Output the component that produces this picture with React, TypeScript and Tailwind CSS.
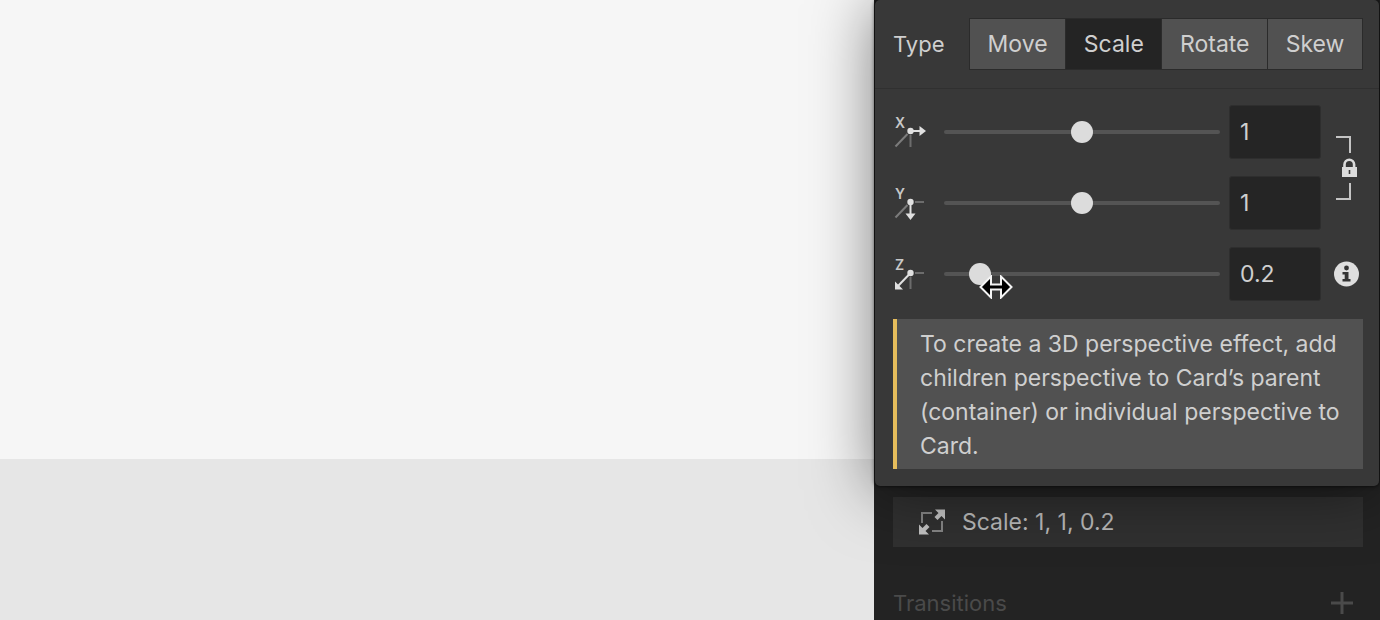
import { useState } from "react";

const transformTypes = ["Move", "Scale", "Rotate", "Skew"];

const axes = ["X", "Y", "Z"] as const;
type Axis = (typeof axes)[number];

function AxisIcon({ axis }: { axis: Axis }) {
  return (
    <svg width="34" height="42" viewBox="0 -4 34 42" fill="none" className="overflow-visible" aria-hidden="true">
      <text x="2" y="13" fontSize="14" fontWeight="600" fill="#c8c8c8" fontFamily="Inter, sans-serif">
        {axis}
      </text>
      {axis !== "Z" && <path d="M14.5 19 2.5 31.5" stroke="#7c7c7c" strokeWidth="2" />}
      {axis !== "Y" && <path d="M17.5 20V32" stroke="#6c6c6c" strokeWidth="2" />}
      {axis !== "X" && <path d="M22 16H31" stroke="#6c6c6c" strokeWidth="2" />}
      {axis === "X" && (
        <>
          <path d="M17.5 16H28" stroke="#e0e0e0" strokeWidth="2" />
          <path d="M26.5 11 33 16 26.5 21Z" fill="#e0e0e0" />
        </>
      )}
      {axis === "Y" && (
        <>
          <path d="M17.5 16V29" stroke="#e0e0e0" strokeWidth="2" />
          <path d="M12.5 27.5 17.5 34 22.5 27.5Z" fill="#e0e0e0" />
        </>
      )}
      {axis === "Z" && (
        <>
          <path d="M17.5 16 5 29" stroke="#e0e0e0" strokeWidth="2" />
          <path d="M2 24.5V32.5H10Z" fill="#e0e0e0" />
        </>
      )}
      <circle cx="17.5" cy="16" r="3.2" fill="#e0e0e0" />
    </svg>
  );
}

function LinkLock() {
  return (
    <svg width="26" height="70" viewBox="0 0 26 70" fill="none">
      <path d="M2 4H16V20M2 66H16V50" stroke="#c4c4c4" strokeWidth="2" />
      <path d="M10.5 35V31.5a4.8 4.8 0 0 1 9.6 0V35" stroke="#dcdcdc" strokeWidth="2.6" />
      <path fillRule="evenodd" clipRule="evenodd" d="M8 34h15V44H8ZM14.7 37v4h1.6v-4Z" fill="#dcdcdc" />
    </svg>
  );
}

function InfoIcon() {
  return (
    <svg width="26" height="26" viewBox="0 0 26 26" fill="none">
      <circle cx="12.5" cy="13" r="12.5" fill="#dedede" />
      <circle cx="12.5" cy="7" r="2.4" fill="#333" />
      <path d="M8.5 11H14.5V18H16.5V20.5H8.5V18H10.7V13.5H8.5Z" fill="#333" />
    </svg>
  );
}

function ResizeCursor() {
  return (
    <svg
      className="pointer-events-none absolute top-[28px] left-[35px]"
      width="34"
      height="24"
      viewBox="0 0 34 24"
      aria-hidden="true"
    >
      <path
        d="M1.5 12 12 1.5V9.5H22V1.5L32.5 12 22 22.5V14.5H12V22.5Z"
        fill="#000"
        stroke="#f4f4f4"
        strokeWidth="2"
      />
    </svg>
  );
}

function ScaleIcon() {
  return (
    <svg width="26" height="26" viewBox="0 0 26 26" fill="none" aria-hidden="true">
      <path d="M3 14V4H13M23 12V22H13" stroke="#858585" strokeWidth="2" />
      <path d="M16 0.5H26V10.5L22.5 7 18.5 11 15.5 8 19.5 4Z" fill="#c2c2c2" />
      <path d="M10 25.5H0V15.5L3.5 19 7.5 15 10.5 18 6.5 22Z" fill="#c2c2c2" />
    </svg>
  );
}

export default function App() {
  const [type, setType] = useState("Scale");
  const [values, setValues] = useState<Record<Axis, string>>({ X: "1", Y: "1", Z: "0.2" });

  const update = (axis: Axis, value: string) => setValues({ ...values, [axis]: value });

  return (
    <div className="flex min-h-screen bg-[#f6f6f6] font-['Inter',sans-serif] text-[23px] text-[#cfcfcf]">
      <main className="grid flex-1 grid-rows-[74fr_26fr]">
        <div className="bg-[#f6f6f6]" />
        <div className="bg-[#e6e6e6]" />
      </main>

      <aside className="w-[506px] shrink-0 bg-[#232323] px-px">
        <section className="relative z-10 rounded-[5px] bg-[#383838] shadow-[0_0_4px_#000000cc,0_4px_64px_#00000080]">
          <div className="flex items-center justify-between border-b border-[#303030] py-[18px] pr-4 pl-[18px]">
            <span id="transform-type" className="text-[22px]">
              Type
            </span>
            <div
              role="group"
              aria-labelledby="transform-type"
              className="flex w-[394px] gap-px border border-[#2b2b2b] bg-[#2b2b2b]"
            >
              {transformTypes.map((item) => (
                <button
                  key={item}
                  type="button"
                  aria-pressed={item === type}
                  onClick={() => setType(item)}
                  className={`h-[50px] grow ${item === type ? "bg-[#242424]" : "bg-[#515151]"}`}
                >
                  {item}
                </button>
              ))}
            </div>
          </div>

          <div className="pt-4 pr-4 pb-[17px] pl-[18px]">
            <div className="grid grid-cols-[51px_1fr_92px_42px] items-center gap-y-[17px]">
              {axes.map((axis) => (
                <div key={axis} className="contents">
                  <label htmlFor={`scale-${axis}`}>
                    <AxisIcon axis={axis} />
                  </label>
                  <div className="relative flex h-[54px] items-center pr-[9px]">
                    <input
                      type="range"
                      min="0"
                      max="2"
                      step="0.1"
                      aria-label={`Scale ${axis}`}
                      value={values[axis]}
                      onChange={(e) => update(axis, e.target.value)}
                      className="h-[22px] w-full cursor-ew-resize appearance-none bg-transparent [&::-webkit-slider-runnable-track]:h-1 [&::-webkit-slider-runnable-track]:rounded-full [&::-webkit-slider-runnable-track]:bg-[#545454] [&::-webkit-slider-thumb]:-mt-[9px] [&::-webkit-slider-thumb]:size-[22px] [&::-webkit-slider-thumb]:appearance-none [&::-webkit-slider-thumb]:rounded-full [&::-webkit-slider-thumb]:bg-[#dcdcdc]"
                    />
                    {axis === "Z" && <ResizeCursor />}
                  </div>
                  <input
                    id={`scale-${axis}`}
                    type="text"
                    value={values[axis]}
                    onChange={(e) => update(axis, e.target.value)}
                    className="h-[54px] w-full rounded-[3px] border border-[#2e2e2e] bg-[#252525] px-[10px]"
                  />
                  {axis === "X" && (
                    <button type="button" aria-label="Link X and Y" className="row-span-2 pl-[13px]">
                      <LinkLock />
                    </button>
                  )}
                  {axis === "Z" && (
                    <button type="button" aria-label="About Z scale" className="pl-[13px]">
                      <InfoIcon />
                    </button>
                  )}
                </div>
              ))}
            </div>

            <p className="mt-[18px] border-l-4 border-[#e6bd5c] bg-[#515151] pt-2 pr-4 pb-[6px] pl-[23px] leading-[34px]">
              To create a 3D perspective effect, add children perspective to Card’s parent (container) or individual
              perspective to Card.
            </p>
          </div>
        </section>

        <div className="pr-4 pl-[18px]">
          <div className="mt-[11px] flex h-[50px] items-center gap-[17px] bg-[#303030] pl-[26px] text-[#b8b8b8]">
            <ScaleIcon />
            Scale: 1, 1, 0.2
          </div>
          <div className="mt-10 flex items-center justify-between text-[22px] leading-8 text-[#4a4a4a]">
            <h2>Transitions</h2>
            <button type="button" aria-label="Add transition" className="pr-[10px]">
              <svg width="22" height="22" viewBox="0 0 22 22" stroke="#4a4a4a" strokeWidth="3">
                <path d="M11 0V22M0 11H22" />
              </svg>
            </button>
          </div>
        </div>
      </aside>
    </div>
  );
}
